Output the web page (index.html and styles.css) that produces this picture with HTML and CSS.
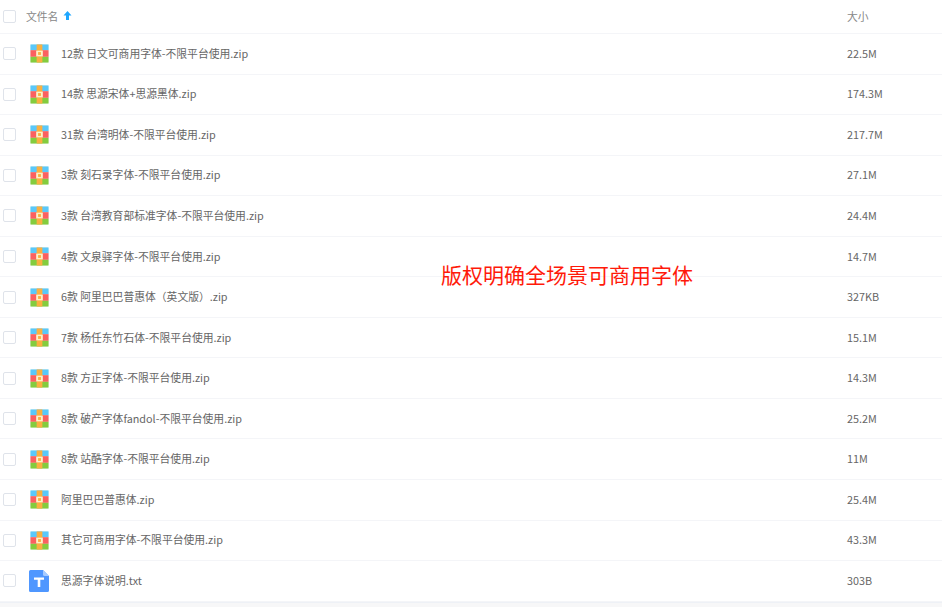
FILE: index.html
```html
<!DOCTYPE html>
<html lang="zh">
<head>
<meta charset="utf-8">
<title>文件列表</title>
<link rel="stylesheet" href="styles.css">
</head>
<body>
<svg class="defs" width="0" height="0" aria-hidden="true">
  <symbol id="zip" viewBox="0 0 20 20">
    <rect width="20" height="20" rx="2" fill="#ebf5ec"/>
    <rect x="0.5" y="0.5" width="19" height="6" fill="#5ac8fa"/>
    <rect x="0.5" y="6.5" width="19" height="7" fill="#fb6060"/>
    <rect x="0.5" y="13.5" width="19" height="6" fill="#84cc3e"/>
    <rect x="7" y="0.5" width="6" height="19" fill="#fbb040"/>
    <rect x="6.5" y="7" width="7" height="6" fill="#fdf0c8"/>
    <rect x="8.5" y="8.5" width="3" height="3" fill="#fbb040"/>
  </symbol>
  <symbol id="txt" viewBox="0 0 20 22" preserveAspectRatio="none">
    <path d="M1.5 0H14l6 6v14.500a1.500 1.500 0 0 1-1.500 1.500h-17A1.500 1.500 0 0 1 0 20.500v-19A1.500 1.500 0 0 1 1.500 0z" fill="#4f97ff"/>
    <path d="M14 0l6 6h-4.500A1.500 1.500 0 0 1 14 4.500z" fill="#a6cbff"/>
    <path d="M5 7.500h10v2.300h-3.700V17H8.700V9.800H5z" fill="#fff"/>
  </symbol>
</svg>
<main class="list">
  <div class="row head">
    <span class="check"></span>
    <span class="name-head">文件名<svg class="arrow" width="9" height="9" viewBox="0 0 9 9"><path d="M4.500 0L8.500 4.500H6V9H3V4.500H.5z" fill="#1ea7ff"/></svg></span>
    <span class="size">大小</span>
  </div>
  <div class="row"><span class="check"></span><svg class="icon"><use href="#zip"/></svg><span class="name">12款 日文可商用字体-不限平台使用.zip</span><span class="size">22.5M</span></div>
  <div class="row"><span class="check"></span><svg class="icon"><use href="#zip"/></svg><span class="name">14款 思源宋体+思源黑体.zip</span><span class="size">174.3M</span></div>
  <div class="row"><span class="check"></span><svg class="icon"><use href="#zip"/></svg><span class="name">31款 台湾明体-不限平台使用.zip</span><span class="size">217.7M</span></div>
  <div class="row"><span class="check"></span><svg class="icon"><use href="#zip"/></svg><span class="name">3款 刻石录字体-不限平台使用.zip</span><span class="size">27.1M</span></div>
  <div class="row"><span class="check"></span><svg class="icon"><use href="#zip"/></svg><span class="name">3款 台湾教育部标准字体-不限平台使用.zip</span><span class="size">24.4M</span></div>
  <div class="row"><span class="check"></span><svg class="icon"><use href="#zip"/></svg><span class="name">4款 文泉驿字体-不限平台使用.zip</span><span class="size">14.7M</span></div>
  <div class="row"><span class="check"></span><svg class="icon"><use href="#zip"/></svg><span class="name">6款 阿里巴巴普惠体（英文版）.zip</span><span class="size">327KB</span></div>
  <div class="row"><span class="check"></span><svg class="icon"><use href="#zip"/></svg><span class="name">7款 杨任东竹石体-不限平台使用.zip</span><span class="size">15.1M</span></div>
  <div class="row"><span class="check"></span><svg class="icon"><use href="#zip"/></svg><span class="name">8款 方正字体-不限平台使用.zip</span><span class="size">14.3M</span></div>
  <div class="row"><span class="check"></span><svg class="icon"><use href="#zip"/></svg><span class="name">8款 破产字体fandol-不限平台使用.zip</span><span class="size">25.2M</span></div>
  <div class="row"><span class="check"></span><svg class="icon"><use href="#zip"/></svg><span class="name">8款 站酷字体-不限平台使用.zip</span><span class="size">11M</span></div>
  <div class="row"><span class="check"></span><svg class="icon"><use href="#zip"/></svg><span class="name">阿里巴巴普惠体.zip</span><span class="size">25.4M</span></div>
  <div class="row"><span class="check"></span><svg class="icon"><use href="#zip"/></svg><span class="name">其它可商用字体-不限平台使用.zip</span><span class="size">43.3M</span></div>
  <div class="row"><span class="check"></span><svg class="icon doc"><use href="#txt"/></svg><span class="name">思源字体说明.txt</span><span class="size">303B</span></div>
</main>
<div class="overlay">版权明确全场景可商用字体</div>
</body>
</html>
```
FILE: styles.css
```css
html, body {
  margin: 0;
  padding: 0;
  height: 100%;
  overflow: hidden;
  background: #f7f7f8;
  font-family: "Noto Sans CJK SC", "Noto Sans", sans-serif;
  font-size: 10.8px;
  color: #666;
}
.defs { position: absolute; }
.list {
  display: flex;
  flex-direction: column;
  background: #fff;
  border-bottom: 1px solid #eef1f6;
}
.row {
  display: flex;
  align-items: center;
  height: 40.55px;
  box-sizing: border-box;
  border-bottom: 1px solid #f4f5f8;
  padding-left: 3px;
}
.row.head {
  height: 34px;
  color: #888;
}
.check {
  flex: none;
  width: 11px;
  height: 11px;
  border: 1px solid #dfe3ea;
  border-radius: 2px;
  background: #fff;
}
.icon {
  flex: none;
  width: 19px;
  height: 19px;
  margin-left: 14px;
  margin-right: 12px;
}
.icon.doc {
  width: 20px;
  height: 22px;
  margin-left: 13px;
}
.name-head {
  flex: none;
  width: 821px;
  margin-left: 10px;
  display: flex;
  align-items: center;
  gap: 5px;
  margin-bottom: 1px;
}
.arrow { position: relative; top: -1px; }
.name {
  flex: 1;
  white-space: nowrap;
  min-width: 0;
  margin-bottom: 2px;
}
.size {
  flex: none;
  width: 95px;
  margin-bottom: 2px;
}
.overlay {
  position: absolute;
  left: 441px;
  top: 259px;
  font-size: 21px;
  line-height: 30px;
  color: #ff1a0a;
  white-space: nowrap;
}
```
